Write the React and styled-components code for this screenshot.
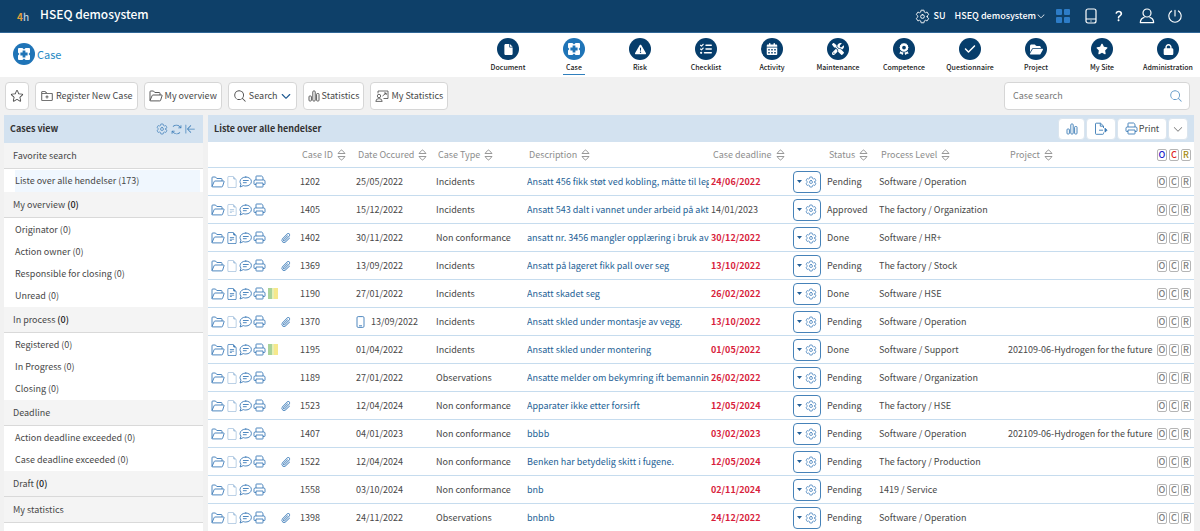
import React, { useState } from 'react';
import styled, { createGlobalStyle } from 'styled-components';
import { BsFileEarmark, BsFileEarmarkText, BsQuestionLg } from 'react-icons/bs';
import { IoSettingsOutline } from 'react-icons/io5';
import { FaFile, FaListCheck, FaCalendarDays, FaScrewdriverWrench, FaAward, FaCheck, FaFolderOpen, FaStar, FaLock, FaTriangleExclamation } from 'react-icons/fa6';
import { PiPaperclip, PiPower, PiFolderPlus, PiMagnifyingGlass, PiStar, PiArrowsClockwise, PiArrowLineLeft, PiCaretDown, PiCaretDownBold } from 'react-icons/pi';

const GlobalStyle = createGlobalStyle`
  * {
    box-sizing: border-box;
  }
  body {
    margin: 0;
    background: #f1f1f1;
    color: #484848;
    font-family: "Noto Sans CJK SC", "Noto Sans", sans-serif;
    font-size: 9px;
    line-height: 14px;
  }
  button, input {
    font: inherit;
    color: inherit;
  }
  a {
    color: inherit;
    text-decoration: none;
  }
  svg {
    display: block;
    flex: none;
  }
`;

const Page = styled.div`
  height: 100vh;
  display: flex;
  flex-direction: column;
  overflow: hidden;
`;

// top bar
const TopBar = styled.header`
  flex: none;
  display: flex;
  align-items: center;
  height: 33px;
  padding: 0 17px;
  background: #0e4069;
  border-bottom: 1px solid #2f6696;
  color: #fff;
`;

const Logo = styled.span`
  width: 23px;
  padding-top: 2px;
  font-size: 10px;
  font-weight: 500;
  color: #b9cddd;

  b {
    color: #e0a13c;
  }
`;

const SystemName = styled.h1`
  flex: 1;
  margin: 0;
  padding-bottom: 4px;
  font-size: 12px;
  font-weight: 500;
`;

const TopButton = styled.button`
  display: flex;
  align-items: center;
  gap: ${(p) => p.$gap || 0}px;
  margin-right: 9px;
  padding: 0;
  border: none;
  background: none;
  color: #fff;
  font-weight: 500;
  white-space: nowrap;
  cursor: pointer;
`;

const TopIcons = styled.div`
  display: flex;
  gap: 12px;
`;

const IconButton = styled.button`
  display: flex;
  align-items: center;
  justify-content: center;
  width: ${(p) => p.$size || 16}px;
  height: ${(p) => p.$size || 16}px;
  padding: 0;
  border: none;
  background: none;
  color: inherit;
  cursor: pointer;
`;

// module bar
const ModuleBar = styled.div`
  flex: none;
  display: flex;
  align-items: flex-start;
  justify-content: space-between;
  height: 44px;
  padding: 5px 6px 0 13px;
  background: #fff;
`;

const ModuleTitle = styled.h2`
  display: flex;
  align-items: center;
  gap: 2px;
  margin: 5px 0 0;
  font-size: 11px;
  font-weight: 400;
  color: #2689c4;
`;

const Modules = styled.nav`
  display: flex;
  gap: 14px;
`;

const Module = styled.a`
  display: flex;
  flex-direction: column;
  align-items: center;
  width: 52px;
  font-size: 7px;
  font-weight: 500;
  color: #222;
  white-space: nowrap;

  span {
    min-width: 22px;
    text-align: center;
    border-bottom: 1px solid ${(p) => (p.$active ? '#2f7fbd' : 'transparent')};
  }
`;

const Circle = styled.i`
  display: flex;
  align-items: center;
  justify-content: center;
  width: 22px;
  height: 22px;
  border-radius: 50%;
  background: ${(p) => (p.$active ? '#1f74b7' : '#063d6b')};
  color: #fff;
`;

// toolbar
const Toolbar = styled.div`
  flex: none;
  display: flex;
  align-items: center;
  gap: 6px;
  height: 38px;
  padding: 0 10px 0 5px;
`;

const ToolButton = styled.button`
  display: flex;
  align-items: center;
  gap: 2px;
  height: 28px;
  padding: 0 4px;
  border: 1px solid #d6d6d6;
  border-radius: 4px;
  background: #fff;
  white-space: nowrap;
  cursor: pointer;
`;

const SearchBox = styled.label`
  display: flex;
  align-items: center;
  width: 186px;
  height: 28px;
  margin-left: auto;
  padding: 0 6px 0 8px;
  border: 1px solid #d6d6d6;
  border-radius: 4px;
  background: #fff;
  color: #5f97c6;

  input {
    flex: 1;
    min-width: 0;
    padding: 0;
    border: none;
    outline: none;
    background: none;
    color: #484848;
  }
  input::placeholder {
    color: #777;
  }
`;

// panels
const Main = styled.main`
  flex: 1;
  min-height: 0;
  display: flex;
  gap: 5px;
  padding: 0 6px 0 4px;
`;

const Sidebar = styled.aside`
  flex: none;
  width: 199px;
  background: #fff;
  overflow: hidden;
`;

const Content = styled.section`
  flex: 1;
  min-width: 0;
  background: #fff;
  overflow: hidden;
`;

const PanelHead = styled.div`
  display: flex;
  align-items: center;
  height: ${(p) => p.$height}px;
  padding: 0 6px;
  background: #d3e2f0;
  color: #4583bb;

  h3 {
    flex: 1;
    margin: 0;
    font-size: 9px;
    font-weight: 700;
    color: #333;
  }
`;

const SideSection = styled.h4`
  display: flex;
  align-items: center;
  gap: 2px;
  height: 26px;
  margin: 0;
  padding: 0 9px;
  border-bottom: 1px solid #d9d9d9;
  background: #f4f4f4;
  font-size: 9px;
  font-weight: 400;

  b {
    font-weight: 500;
    color: #222;
  }
`;

const SideList = styled.ul`
  margin: 0;
  padding: 1px 3px 0 11px;
  list-style: none;
`;

const SideLink = styled.a`
  display: block;
  line-height: 22px;
  background: ${(p) => (p.$active ? '#f0f7fe' : 'none')};
`;

const HeadButtons = styled.div`
  display: flex;
  gap: 1px;
`;

const HeadButton = styled.button`
  display: flex;
  align-items: center;
  justify-content: center;
  gap: 1px;
  height: 22px;
  min-width: ${(p) => p.$width}px;
  padding: 0;
  border: 1px solid #dbe5ee;
  border-radius: 4px;
  background: #fff;
  color: ${(p) => p.$color || '#3a7ab5'};
  cursor: pointer;

  span {
    color: #484848;
  }
`;

// table
const Table = styled.table`
  width: 100%;
  table-layout: fixed;
  border-collapse: separate;
  border-spacing: 0;
`;

const Col = styled.col`
  width: ${(p) => (p.$width ? p.$width + 'px' : 'auto')};
`;

const Th = styled.th`
  height: 26px;
  padding: 0 0 0 ${(p) => (p.$roles ? 2 : 4)}px;
  border-bottom: 1px solid #c6dcee;
  text-align: left;
  font-weight: 400;
  color: #8d8d8d;
  white-space: nowrap;
`;

const SortLabel = styled.span`
  display: flex;
  align-items: center;
  gap: 4px;
`;

const Td = styled.td`
  height: 28px;
  padding: 0 0 0 2px;
  border-bottom: 1px solid #c6dcee;
  white-space: nowrap;
`;

const RowIcons = styled.div`
  display: flex;
  align-items: center;
  gap: 1px;
  padding-left: 1px;
  color: #3c7bb8;
`;

const FileMark = styled.span`
  opacity: ${(p) => (p.$faded ? 0.45 : 1)};
`;

const Clip = styled.span`
  margin: 0 6px 0 auto;
`;

const Flags = styled.span`
  width: 10px;
  height: 11px;
  margin-left: 1px;
  background: linear-gradient(to right, #a8d29a 4px, #e6efb4 4px, #e6efb4 6px, #f6e88c 6px);
`;

const DateCell = styled.span`
  display: flex;
  align-items: center;
  gap: 6px;

  svg {
    color: #3c7bb8;
  }
`;

const CaseLink = styled.a`
  display: block;
  overflow: hidden;
  color: #245f96;
`;

const Overdue = styled.b`
  color: #d81e3c;
`;

const ActionButton = styled.button`
  display: flex;
  align-items: center;
  justify-content: center;
  gap: 3px;
  width: 28px;
  height: 22px;
  padding: 0;
  border: 1px solid #4682b8;
  border-radius: 4px;
  background: #fff;
  color: #3c7bb8;
  cursor: pointer;
`;

const Roles = styled.span`
  display: flex;
  gap: 2px;
  padding-left: 1px;
`;

const Role = styled.span`
  display: flex;
  align-items: center;
  justify-content: center;
  width: 10px;
  height: 12px;
  border: 1px solid #b5b5b5;
  border-radius: 2px;
  font-weight: 500;
  line-height: 10px;
  color: ${(p) => p.$color || '#808080'};
`;

function CaseIcon() {
  return (
    <svg width="14" height="14" viewBox="0 0 14 14" fill="none">
      <path d="M2 1h3.400l1.600 1.400L8.600 1H12q1 0 1 1v3.400L11.600 7 13 8.600V12q0 1-1 1H8.600L7 11.600 5.400 13H2q-1 0-1-1V8.600L2.400 7 1 5.400V2q0-1 1-1z" fill="#fff" />
      <path d="M5.600 3.400h2.800v2.200h2.200v2.800H8.400v2.200H5.600V8.400H3.400V5.600h2.200z" fill="#1f74b7" />
    </svg>
  );
}

function FolderIcon() {
  return (
    <svg width="14" height="12" viewBox="0 0 14 12" fill="none" stroke="currentColor" strokeWidth="0.900" strokeLinejoin="round">
      <path d="M1 10.500V1.800Q1 1 1.800 1h2.700l1.300 1.500h4.400q.8 0 .8.800V5M1 10.500 3.200 5.500Q3.400 5 4 5h8.600q.7 0 .5.600l-1.500 4.700q-.2.600-.8.600H1.500Q1 10.900 1 10.500z" />
    </svg>
  );
}

function ChatIcon() {
  return (
    <svg width="13" height="12" viewBox="0 0 13 12" fill="none" stroke="currentColor" strokeWidth="0.900" strokeLinecap="round" strokeLinejoin="round">
      <path d="M6.800 1C10 1 12.400 3 12.400 5.500S10 10 6.800 10q-1.400 0-2.500-.4L1 11l1-2.900Q1 7 1 5.500C1.200 3 3.600 1 6.800 1zM4.300 4.500h5M4.300 6.700h3" />
    </svg>
  );
}

function PrinterIcon() {
  return (
    <svg width="13" height="13" viewBox="0 0 13 13" fill="none" stroke="currentColor" strokeWidth="0.900" strokeLinejoin="round">
      <path d="M3 5V1.500Q3 1 3.500 1h5L10 2.300V5M3 9.500H1.600Q1 9.500 1 8.900V6.200Q1 5 2.200 5h8.600Q12 5 12 6.200v2.700q0 .6-.6.600H10M3 8h7v3.500q0 .5-.5.500h-6Q3 12 3 11.500z" />
    </svg>
  );
}

function PresenterIcon() {
  return (
    <svg width="14" height="12" viewBox="0 0 14 12" fill="none" stroke="currentColor" strokeWidth="0.800" strokeLinejoin="round">
      <path d="M3 3.400V1h10v7.500H8.500M7.500 6 11 3.200M9 3h2.200v2" />
      <circle cx="4" cy="6" r="1.700" />
      <path d="M.8 11.400Q1 8.600 4 8.600t3.200 2.800z" />
    </svg>
  );
}

function SortIcon() {
  return (
    <svg width="9" height="12" viewBox="0 0 9 12" fill="none" stroke="#8d8d8d" strokeWidth="0.900" strokeLinejoin="round">
      <path d="M1 4.500 3.700 1.400Q4.500.6 5.300 1.400L8 4.500zM1 7.500h7L5.300 10.600Q4.500 11.400 3.700 10.600z" />
    </svg>
  );
}

function BarsIcon() {
  return (
    <svg width="12" height="12" viewBox="0 0 12 12" fill="none" stroke="currentColor" strokeWidth="0.900">
      <rect x="1" y="6" width="2.400" height="5" rx=".8" />
      <rect x="4.800" y="1" width="2.400" height="10" rx=".8" />
      <rect x="8.600" y="3.500" width="2.400" height="7.500" rx=".8" />
    </svg>
  );
}

function ExportIcon() {
  return (
    <svg width="14" height="14" viewBox="0 0 14 14" fill="none" stroke="currentColor" strokeWidth="0.900" strokeLinejoin="round">
      <path d="M9.500 6V4L6.500 1.200H2.200Q1.500 1.200 1.500 2v9.500q0 .8.700.8h6.600q.7 0 .7-.8V10.500M6.300 1.200V4.200H9.500M5 8.200h4" />
      <path d="m11 6.200 2 2-2 2z" fill="currentColor" />
    </svg>
  );
}

function GridIcon() {
  return (
    <svg width="14" height="14" viewBox="0 0 14 14" fill="#2d7cc7">
      <rect width="6" height="6" rx="1" />
      <rect x="8" width="6" height="6" rx="1" />
      <rect y="8" width="6" height="6" rx="1" />
      <rect x="8" y="8" width="6" height="6" rx="1" />
    </svg>
  );
}

function PhoneIcon() {
  return (
    <svg width="12" height="16" viewBox="0 0 12 16" fill="none" stroke="#fff" strokeWidth="1.200">
      <rect x="1" y="1" width="10" height="14" rx="2" />
      <path d="M1 11h10M5.400 13h1.200" />
    </svg>
  );
}

function SmallPhoneIcon() {
  return (
    <svg width="9" height="12" viewBox="0 0 9 12" fill="none" stroke="currentColor" strokeWidth="0.900">
      <rect x="1" y=".6" width="7" height="10.800" rx="1.200" />
      <path d="M3 9.800h3" />
    </svg>
  );
}

function UserIcon() {
  return (
    <svg width="16" height="16" viewBox="0 0 16 16" fill="none" stroke="#fff" strokeWidth="1.200" strokeLinejoin="round">
      <circle cx="8" cy="5" r="4" />
      <path d="M5.500 9.300Q1.600 10 1.300 14.600h13.400Q14.400 10 10.500 9.300" />
    </svg>
  );
}

function Triangle() {
  return (
    <svg width="5" height="3" viewBox="0 0 5 3" fill="#245f96">
      <path d="M0 0h5L2.500 3z" />
    </svg>
  );
}

const modules = [
  ['Document', <FaFile size={11} />],
  ['Case', <CaseIcon />],
  ['Risk', <FaTriangleExclamation size={11} />],
  ['Checklist', <FaListCheck size={12} />],
  ['Activity', <FaCalendarDays size={12} />],
  ['Maintenance', <FaScrewdriverWrench size={12} />],
  ['Competence', <FaAward size={12} />],
  ['Questionnaire', <FaCheck size={12} />],
  ['Project', <FaFolderOpen size={13} />],
  ['My Site', <FaStar size={12} />],
  ['Administration', <FaLock size={11} />],
];

const sections = [
  { title: 'Favorite search', items: ['Liste over alle hendelser (173)'] },
  { title: 'My overview', count: 0, items: ['Originator (0)', 'Action owner (0)', 'Responsible for closing (0)', 'Unread (0)'] },
  { title: 'In process', count: 0, items: ['Registered (0)', 'In Progress (0)', 'Closing (0)'] },
  { title: 'Deadline', items: ['Action deadline exceeded (0)', 'Case deadline exceeded (0)'] },
  { title: 'Draft', count: 0, items: [] },
  { title: 'My statistics', items: [] },
];

const columns = [
  { width: 90 },
  { label: 'Case ID', width: 56 },
  { label: 'Date Occured', width: 80 },
  { label: 'Case Type', width: 91 },
  { label: 'Description', width: 184 },
  { label: 'Case deadline', width: 82 },
  { width: 34 },
  { label: 'Status', width: 52 },
  { label: 'Process Level', width: 129 },
  { label: 'Project' },
];

const cases = [
  { id: 1202, date: '25/05/2022', type: 'Incidents', text: 'Ansatt 456 fikk støt ved kobling, måtte til leg', deadline: '24/06/2022', status: 'Pending', level: 'Software / Operation' },
  { id: 1405, date: '15/12/2022', type: 'Incidents', text: 'Ansatt 543 dalt i vannet under arbeid på akte', deadline: '14/01/2023', onTime: true, status: 'Approved', level: 'The factory / Organization', file: 'faded' },
  { id: 1402, date: '30/11/2022', type: 'Non conformance', text: 'ansatt nr. 3456 mangler opplæring i bruk av', deadline: '30/12/2022', status: 'Done', level: 'Software / HR+', file: 'text', clip: true },
  { id: 1369, date: '13/09/2022', type: 'Incidents', text: 'Ansatt på lageret fikk pall over seg', deadline: '13/10/2022', status: 'Pending', level: 'The factory / Stock', clip: true },
  { id: 1190, date: '27/01/2022', type: 'Incidents', text: 'Ansatt skadet seg', deadline: '26/02/2022', status: 'Done', level: 'Software / HSE', file: 'text', flags: true },
  { id: 1370, date: '13/09/2022', type: 'Incidents', text: 'Ansatt skled under montasje av vegg.', deadline: '13/10/2022', status: 'Pending', level: 'Software / Operation', clip: true, mobile: true },
  { id: 1195, date: '01/04/2022', type: 'Incidents', text: 'Ansatt skled under montering', deadline: '01/05/2022', status: 'Done', level: 'Software / Support', project: '202109-06-Hydrogen for the future', file: 'text', flags: true },
  { id: 1189, date: '27/01/2022', type: 'Observations', text: 'Ansatte melder om bekymring ift bemanning', deadline: '26/02/2022', status: 'Pending', level: 'Software / Organization' },
  { id: 1523, date: '12/04/2024', type: 'Non conformance', text: 'Apparater ikke etter forsirft', deadline: '12/05/2024', status: 'Pending', level: 'The factory / HSE', clip: true },
  { id: 1407, date: '04/01/2023', type: 'Non conformance', text: 'bbbb', deadline: '03/02/2023', status: 'Pending', level: 'Software / Operation', project: '202109-06-Hydrogen for the future' },
  { id: 1522, date: '12/04/2024', type: 'Non conformance', text: 'Benken har betydelig skitt i fugene.', deadline: '12/05/2024', status: 'Pending', level: 'The factory / Production', clip: true },
  { id: 1558, date: '03/10/2024', type: 'Non conformance', text: 'bnb', deadline: '02/11/2024', status: 'Pending', level: '1419 / Service' },
  { id: 1398, date: '24/11/2022', type: 'Observations', text: 'bnbnb', deadline: '24/12/2022', status: 'Pending', level: 'Software / Operation', clip: true },
];

function CaseRow({ item }) {
  return (
    <tr>
      <Td>
        <RowIcons>
          <FolderIcon />
          <FileMark $faded={item.file !== 'text'}>
            {item.file ? <BsFileEarmarkText size={12} /> : <BsFileEarmark size={12} />}
          </FileMark>
          <ChatIcon />
          <PrinterIcon />
          {item.flags && <Flags />}
          {item.clip && <Clip><PiPaperclip size={12} /></Clip>}
        </RowIcons>
      </Td>
      <Td>{item.id}</Td>
      <Td>
        <DateCell>
          {item.mobile && <SmallPhoneIcon />}
          {item.date}
        </DateCell>
      </Td>
      <Td>{item.type}</Td>
      <Td><CaseLink href="#">{item.text}</CaseLink></Td>
      <Td>{item.onTime ? item.deadline : <Overdue>{item.deadline}</Overdue>}</Td>
      <Td>
        <ActionButton aria-label="Actions">
          <Triangle />
          <IoSettingsOutline size={12} />
        </ActionButton>
      </Td>
      <Td>{item.status}</Td>
      <Td>{item.level}</Td>
      <Td>{item.project}</Td>
      <Td>
        <Roles>
          <Role>O</Role>
          <Role>C</Role>
          <Role>R</Role>
        </Roles>
      </Td>
    </tr>
  );
}

function App() {
  const [query, setQuery] = useState('');

  return (
    <Page>
      <GlobalStyle />
      <TopBar>
        <Logo><b>4</b>h</Logo>
        <SystemName>HSEQ demosystem</SystemName>
        <TopButton $gap={3}><IoSettingsOutline size={15} />SU</TopButton>
        <TopButton>HSEQ demosystem<PiCaretDown size={10} /></TopButton>
        <TopIcons>
          <IconButton aria-label="Modules"><GridIcon /></IconButton>
          <IconButton aria-label="Mobile"><PhoneIcon /></IconButton>
          <IconButton aria-label="Help"><BsQuestionLg size={14} /></IconButton>
          <IconButton aria-label="Profile"><UserIcon /></IconButton>
          <IconButton aria-label="Log out"><PiPower size={18} /></IconButton>
        </TopIcons>
      </TopBar>

      <ModuleBar>
        <ModuleTitle><Circle $active><CaseIcon /></Circle>Case</ModuleTitle>
        <Modules>
          {modules.map(([name, icon]) => (
            <Module key={name} href="#" $active={name === 'Case'}>
              <Circle $active={name === 'Case'}>{icon}</Circle>
              <span>{name}</span>
            </Module>
          ))}
        </Modules>
      </ModuleBar>

      <Toolbar>
        <ToolButton aria-label="Favorite"><PiStar size={14} /></ToolButton>
        <ToolButton><PiFolderPlus size={14} />Register New Case</ToolButton>
        <ToolButton><FolderIcon />My overview</ToolButton>
        <ToolButton><PiMagnifyingGlass size={14} />Search<PiCaretDownBold size={12} color="#1f5a92" /></ToolButton>
        <ToolButton><BarsIcon />Statistics</ToolButton>
        <ToolButton><PresenterIcon />My Statistics</ToolButton>
        <SearchBox>
          <input aria-label="Case search" placeholder="Case search" value={query} onChange={(e) => setQuery(e.target.value)} />
          <PiMagnifyingGlass size={14} />
        </SearchBox>
      </Toolbar>

      <Main>
        <Sidebar>
          <PanelHead $height={28}>
            <h3>Cases view</h3>
            <IconButton $size={14} aria-label="Settings"><IoSettingsOutline size={12} /></IconButton>
            <IconButton $size={14} aria-label="Refresh"><PiArrowsClockwise size={13} /></IconButton>
            <IconButton $size={14} aria-label="Collapse"><PiArrowLineLeft size={12} /></IconButton>
          </PanelHead>
          {sections.map((section, i) => (
            <React.Fragment key={section.title}>
              <SideSection>
                {section.title}
                {section.count !== undefined && <b>({section.count})</b>}
              </SideSection>
              {section.items.length > 0 && (
                <SideList>
                  {section.items.map((item) => (
                    <li key={item}><SideLink href="#" $active={i === 0}>{item}</SideLink></li>
                  ))}
                </SideList>
              )}
            </React.Fragment>
          ))}
        </Sidebar>

        <Content>
          <PanelHead $height={27}>
            <h3>Liste over alle hendelser</h3>
            <HeadButtons>
              <HeadButton $width={27} aria-label="Chart"><BarsIcon /></HeadButton>
              <HeadButton $width={30} aria-label="Export"><ExportIcon /></HeadButton>
              <HeadButton $width={50}><PrinterIcon /><span>Print</span></HeadButton>
              <HeadButton $width={20} $color="#777" aria-label="More"><PiCaretDown size={12} /></HeadButton>
            </HeadButtons>
          </PanelHead>
          <Table>
            <colgroup>
              {columns.map((col, i) => <Col key={i} $width={col.width} />)}
              <Col $width={40} />
            </colgroup>
            <thead>
              <tr>
                {columns.map((col, i) => (
                  <Th key={i}>{col.label && <SortLabel>{col.label}<SortIcon /></SortLabel>}</Th>
                ))}
                <Th $roles>
                  <Roles>
                    <Role $color="#2222c8">O</Role>
                    <Role $color="#e02020">C</Role>
                    <Role $color="#a68a10">R</Role>
                  </Roles>
                </Th>
              </tr>
            </thead>
            <tbody>
              {cases.map((item) => <CaseRow key={item.id} item={item} />)}
            </tbody>
          </Table>
        </Content>
      </Main>
    </Page>
  );
}

export default App;
